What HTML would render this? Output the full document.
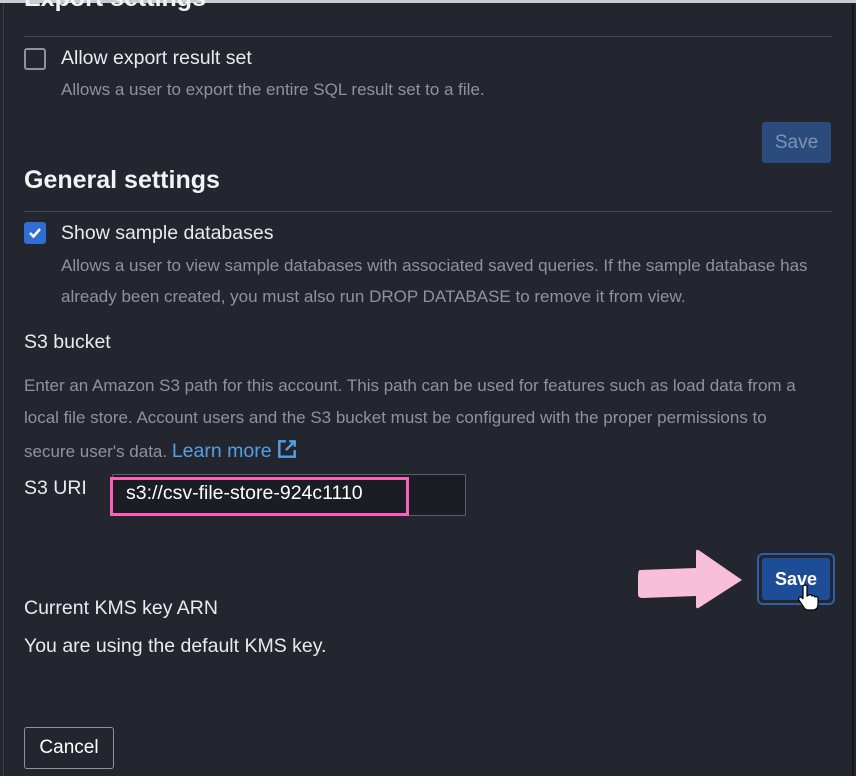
<!DOCTYPE html>
<html><head><meta charset="utf-8"><style>
*{margin:0;padding:0;box-sizing:border-box}
body{width:856px;height:776px;background:#23262f;font-family:"Liberation Sans",sans-serif;color:#e8eaee;position:relative;overflow:hidden}
.a{position:absolute;white-space:nowrap}
.h{font-weight:bold;font-size:25px;color:#f2f3f5}
.t{font-size:19.5px}
.d{font-size:17px;color:#8d939d}
.line{position:absolute;left:24px;width:808px;height:1px;background:#454a55}
.cb{position:absolute;left:24px;width:22px;height:22px;border:2px solid #8d939d;border-radius:3px}
.btn{position:absolute;border-radius:3px;font-size:19px;display:flex;align-items:center;justify-content:center}
</style></head><body>
<div style="position:absolute;left:0;top:0;width:856px;height:3px;background:#c9ccd1"></div>
<div style="position:absolute;left:3px;top:3px;width:1px;height:773px;background:#3a3e48"></div>
<div style="position:absolute;left:852px;top:3px;width:2px;height:773px;background:#15171c"></div>
<div class="a h" style="left:24px;top:-16px">Export settings</div>
<div class="line" style="top:36px"></div>
<div class="cb" style="top:48px"></div>
<div class="a t" style="left:61px;top:47px">Allow export result set</div>
<div class="a d" style="left:61px;top:80px">Allows a user to export the entire SQL result set to a file.</div>
<div class="btn" style="left:762px;top:122px;width:69px;height:41px;background:#2a4b7c;color:#7d93b6">Save</div>
<div class="a h" style="left:24px;top:166px">General settings</div>
<div class="line" style="top:211px"></div>
<div class="cb" style="top:222px;background:#2f6fd3;border-color:#2f6fd3"><svg width="18" height="18" viewBox="0 0 18 18" style="position:absolute;left:0;top:0"><path d="M4 9l3.5 3.5L14 5" stroke="#fff" stroke-width="2.5" fill="none"/></svg></div>
<div class="a t" style="left:61px;top:222px">Show sample databases</div>
<div class="a d" style="left:61px;top:256px">Allows a user to view sample databases with associated saved queries. If the sample database has</div>
<div class="a d" style="left:61px;top:287px">already been created, you must also run DROP DATABASE to remove it from view.</div>
<div class="a t" style="left:24px;top:331px">S3 bucket</div>
<div class="a d" style="left:24px;top:376px">Enter an Amazon S3 path for this account. This path can be used for features such as load data from a</div>
<div class="a d" style="left:24px;top:408px">local file store. Account users and the S3 bucket must be configured with the proper permissions to</div>
<div class="a d" style="left:24px;top:438px">secure user's data. <span style="color:#539fe5;font-size:19.5px">Learn more</span> <svg width="22" height="22" viewBox="0 0 20 20" style="vertical-align:-3px"><path d="M9 3H3v14h14v-6M12 3h5v5M17 3l-8 8" stroke="#539fe5" stroke-width="2.2" fill="none"/></svg></div>
<div class="a t" style="left:24px;top:477px">S3 URI</div>
<div style="position:absolute;left:112px;top:474px;width:354px;height:42px;background:#1b1d24;border:1px solid #5a5f69;border-radius:2px"></div>
<div style="position:absolute;left:110px;top:477px;width:299px;height:39px;border:3px solid #ff5fb8"></div>
<div class="a t" style="left:126px;top:482px;color:#fff">s3://csv-file-store-924c1110</div>
<div style="position:absolute;left:757px;top:553px;width:78px;height:52px;border:2px solid #2d5fa6;border-radius:6px"></div>
<div class="btn" style="left:762px;top:558px;width:68px;height:42px;background:#1e4d98;color:#fff;font-weight:bold;font-size:18px">Save</div>
<svg style="position:absolute;left:636px;top:548px" width="112" height="64" viewBox="0 0 112 64"><path d="M4 22Q2 22 2 30V46Q2 50 6 50L60 48V58Q60 62 64 59L106 32 64 3Q60 0 60 4V20Z" fill="#f9bfd8"/></svg>
<svg style="position:absolute;left:797px;top:584px" width="24" height="28" viewBox="0 0 24 28"><path d="M6 2Q8 0 10 2V12L12 11Q14 10 15 12Q17 11 18 13Q20 12 21 14V20Q21 25 17 26H11Q8 26 6 22L2 16Q1 14 3 13Q5 13 6 15Z" fill="#fff" stroke="#000" stroke-width="1.2"/></svg>
<div class="a t" style="left:24px;top:597px">Current KMS key ARN</div>
<div class="a t" style="left:24px;top:635px">You are using the default KMS key.</div>
<div class="btn" style="left:24px;top:727px;width:90px;height:42px;border:1px solid #8d939d;color:#fff">Cancel</div>
</body></html>
